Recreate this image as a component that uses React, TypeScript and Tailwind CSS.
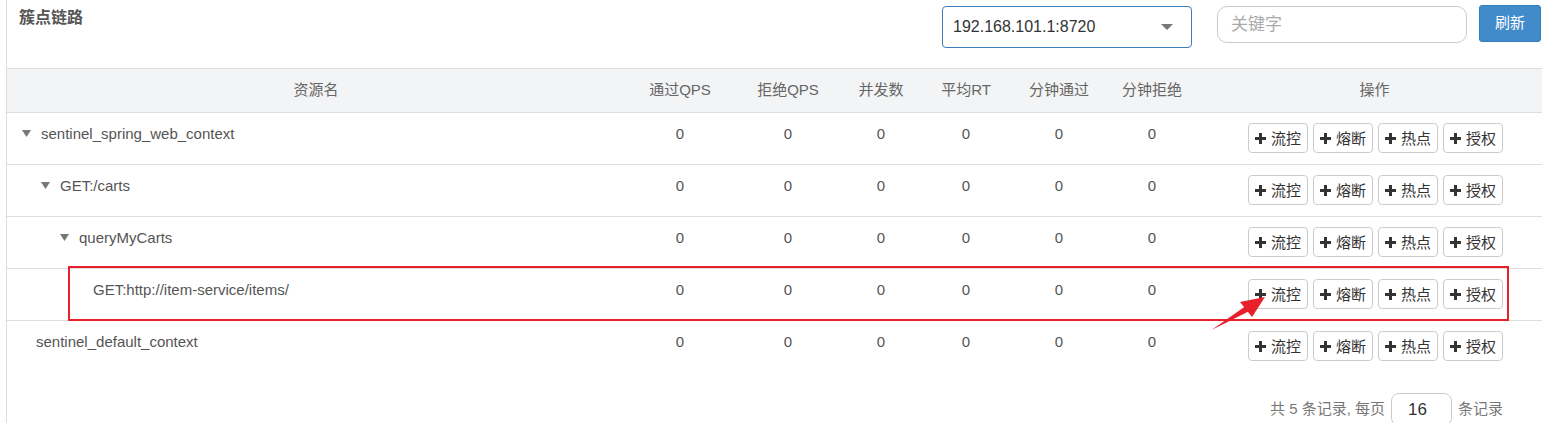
import React from 'react';

interface NodeRow {
  name: string;
  level: number;
  expandable: boolean;
}

const rows: NodeRow[] = [
  { name: 'sentinel_spring_web_context', level: 0, expandable: true },
  { name: 'GET:/carts', level: 1, expandable: true },
  { name: 'queryMyCarts', level: 2, expandable: true },
  { name: 'GET:http://item-service/items/', level: 3, expandable: false },
  { name: 'sentinel_default_context', level: 0, expandable: false },
];

const metrics = ['通过QPS', '拒绝QPS', '并发数', '平均RT', '分钟通过', '分钟拒绝'];
const actions = ['流控', '熔断', '热点', '授权'];

const gridCols = 'grid grid-cols-[618px_110px_106px_80px_90px_96px_90px_1fr]';

function Plus() {
  return (
    <svg width="11" height="11" viewBox="0 0 11 11" className="shrink-0">
      <path d="M4 0h3v4h4v3H7v4H4V7H0V4h4z" fill="#333" />
    </svg>
  );
}

function Caret() {
  return (
    <svg width="9" height="7" viewBox="0 0 9 7" className="shrink-0">
      <path d="M0 0h9L4.5 7z" fill="#777" />
    </svg>
  );
}

function ActionButton({ label }: { label: string }) {
  return (
    <button className="inline-flex items-center justify-center gap-[5px] w-[60px] h-[30px] border border-[#ccc] rounded-[4px] bg-white text-[#333] text-[15px] leading-none">
      <Plus />
      <span>{label}</span>
    </button>
  );
}

export default function App() {
  return (
    <div className="relative w-[1542px] h-[423px] overflow-hidden bg-white font-['Liberation_Sans','Noto_Sans_CJK_SC',sans-serif]">
      <div className="ml-[6px] h-full border-l border-[#ddd]">
        {/* toolbar */}
        <div className="flex h-[68px] items-start">
          <h3 className="pl-[12px] pt-[7px] text-[16px] leading-[22px] font-semibold text-[#555]">簇点链路</h3>
          <div className="ml-auto mr-[1px] flex items-start">
            <div className="mt-[6px] flex h-[42px] w-[250px] items-center justify-between rounded-[4px] border border-[#3d7ebf] pl-[10px] pr-[18px] text-[16px] text-[#333]">
              <span>192.168.101.1:8720</span>
              <svg width="12" height="6" viewBox="0 0 12 6">
                <path d="M0 0h12L6 6z" fill="#777" />
              </svg>
            </div>
            <div className="ml-[25px] mt-[6px] flex h-[37px] w-[250px] items-center rounded-[10px] border border-[#ccc] pl-[13px] text-[17px] text-[#aaa]">
              关键字
            </div>
            <button className="ml-[12px] mt-[5px] h-[37px] w-[62px] rounded-[3px] border border-[#357ebd] bg-[#428bca] text-[15px] text-white">
              刷新
            </button>
          </div>
        </div>

        {/* table head */}
        <div className={`${gridCols} h-[45px] items-center border-y border-[#ddd] bg-[#f3f4f5] text-[15px] text-[#666]`}>
          <div className="text-center">资源名</div>
          {metrics.map((m) => (
            <div key={m} className="text-center">{m}</div>
          ))}
          <div className="pl-[10px] text-center">操作</div>
        </div>

        {/* rows */}
        {rows.map((r, i) => (
          <div
            key={r.name}
            className={`${gridCols} h-[52px] items-start pt-[10px] text-[15px] leading-[21px] text-[#555] ${i < rows.length - 1 ? 'border-b border-[#ddd]' : ''}`}
          >
            <div className="flex items-center pl-[15px]">
              {r.level === 1 && <span className="w-[19px] shrink-0" />}
              {r.level === 2 && <span className="w-[38px] shrink-0" />}
              {r.level === 3 && <span className="w-[57px] shrink-0" />}
              {r.expandable ? (
                <span className="mr-[10px] flex w-[9px] items-center">
                  <Caret />
                </span>
              ) : (
                <span className="w-[14px] shrink-0" />
              )}
              <span>{r.name}</span>
            </div>
            {metrics.map((m) => (
              <div key={m} className="text-center">0</div>
            ))}
            <div className="flex justify-center gap-[5px] pl-[12px]">
              {actions.map((a) => (
                <ActionButton key={a} label={a} />
              ))}
            </div>
          </div>
        ))}

        {/* pager */}
        <div className="flex items-center justify-end pr-[39px] pt-[20px] text-[15px] text-[#777]">
          <span>共 5 条记录, 每页</span>
          <div className="mx-[6px] flex h-[33px] w-[61px] items-center rounded-[8px] border border-[#ccc] pl-[16px] text-[17px] text-[#333]">
            16
          </div>
          <span>条记录</span>
        </div>
      </div>

      {/* annotation */}
      <div className="absolute left-[68px] top-[266px] h-[55px] w-[1441px] border-2 border-[#e8202a]" />
      <svg className="absolute left-[1205px] top-[290px]" width="65" height="45" viewBox="1205 290 65 45">
        <path d="M1211.5 330 L1245 306.5 L1248.5 311.5 Z" fill="#e8202a" />
        <path d="M1265 297 L1240 302 L1252 317 Z" fill="#e8202a" />
      </svg>
    </div>
  );
}
